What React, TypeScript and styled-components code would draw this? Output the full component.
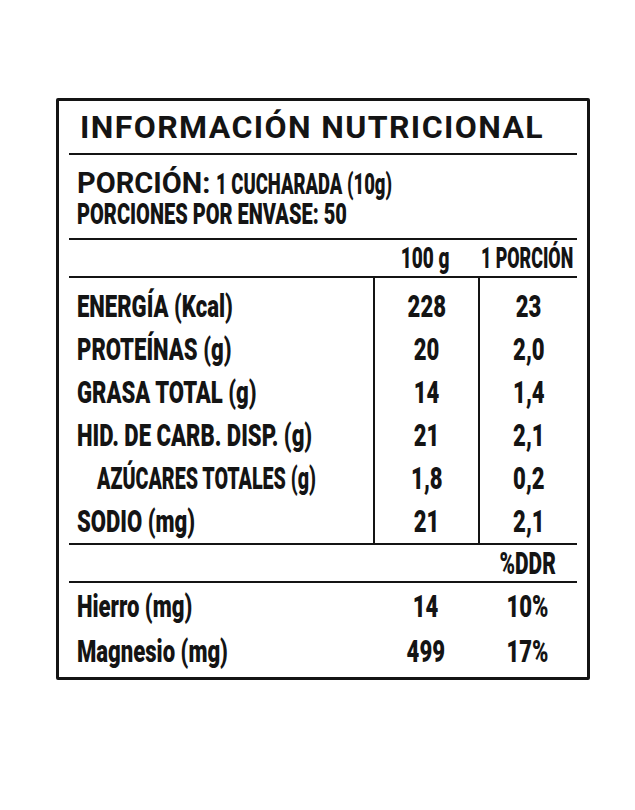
import { Fragment } from "react";
import styled, { createGlobalStyle } from "styled-components";

const Global = createGlobalStyle`
  body {
    margin: 0;
    background: #fff;
    color: #141414;
    font-family: Roboto, "Liberation Sans", sans-serif;
  }
`;

const Page = styled.main`
  padding: 98px 0 0 56px;
`;

const Label = styled.section`
  box-sizing: border-box;
  width: 534px;
  border: 3px solid #141414;
  border-radius: 2px;
  padding: 0 10px;
`;

const Title = styled.h1`
  margin: 0;
  height: 52px;
  display: flex;
  align-items: center;
  padding-left: 11px;
  font-size: 32px;
  font-weight: 700;
  letter-spacing: 1.4px;
  border-bottom: 2.5px solid #141414;
`;

const Serving = styled.div`
  padding: 12px 0 9px 8px;
  border-bottom: 2.5px solid #141414;
`;

const ServingLine = styled.div<{ $h: number; $size: number }>`
  height: ${(p) => p.$h}px;
  display: flex;
  align-items: center;
  font-size: ${(p) => p.$size}px;
  white-space: nowrap;
`;

const Strong = styled.span`
  margin-right: 6px;
  font-size: 29px;
  font-weight: 700;
`;

// DIN-like condensed lettering: squeeze heavy Roboto horizontally
const Cond = styled.span<{ $k?: number; $center?: boolean }>`
  display: inline-block;
  white-space: nowrap;
  font-weight: 900;
  transform: scaleX(${(p) => p.$k ?? 0.69});
  transform-origin: ${(p) => (p.$center ? "center" : "left")} center;
`;

const Grid = styled.div<{ $rows: string; $lined?: boolean }>`
  display: grid;
  grid-template-columns: 304px 105px 99px;
  grid-template-rows: ${(p) => p.$rows};
  border-bottom: ${(p) => (p.$lined ? "2.5px solid #141414" : "none")};
`;

const Cell = styled.div<{
  $divided?: boolean;
  $indent?: number;
  $size?: number;
  $pt?: number;
  $pb?: number;
}>`
  display: flex;
  align-items: center;
  justify-content: ${(p) => (p.$indent === undefined ? "center" : "flex-start")};
  padding: ${(p) => p.$pt ?? 0}px 0 ${(p) => p.$pb ?? 0}px ${(p) => p.$indent ?? 0}px;
  font-size: ${(p) => p.$size ?? 32}px;
  white-space: nowrap;
  border-left: ${(p) => (p.$divided ? "2.5px solid #141414" : "none")};
`;

const Filler = styled.div`
  height: 4px;
`;

type Row = { name: string; a: string; b: string; indent?: boolean; k?: number };

const nutrients: Row[] = [
  { name: "ENERGÍA (Kcal)", a: "228", b: "23", k: 0.69 },
  { name: "PROTEÍNAS (g)", a: "20", b: "2,0" },
  { name: "GRASA TOTAL (g)", a: "14", b: "1,4" },
  { name: "HID. DE CARB. DISP. (g)", a: "21", b: "2,1" },
  { name: "AZÚCARES TOTALES (g)", a: "1,8", b: "0,2", indent: true, k: 0.615 },
  { name: "SODIO (mg)", a: "21", b: "2,1" },
];

const minerals: Row[] = [
  { name: "Hierro (mg)", a: "14", b: "10%" },
  { name: "Magnesio (mg)", a: "499", b: "17%" },
];

const App = () => {
  const last = nutrients.length - 1;
  return (
    <Page>
      <Global />
      <Label>
        <Title>INFORMACIÓN NUTRICIONAL</Title>
        <Serving>
          <ServingLine $h={32} $size={30}>
            <Strong>PORCIÓN:</Strong>
            <Cond $k={0.615}>1 CUCHARADA (10g)</Cond>
          </ServingLine>
          <ServingLine $h={30} $size={29}>
            <Cond $k={0.69}>PORCIONES POR ENVASE: 50</Cond>
          </ServingLine>
        </Serving>

        <Grid $rows="36px" $lined>
          <Cell />
          <Cell $size={29}>
            <Cond $center $k={0.655}>100 g</Cond>
          </Cell>
          <Cell $size={29}>
            <Cond $center $k={0.615}>1 PORCIÓN</Cond>
          </Cell>
        </Grid>

        <Grid $rows="49px repeat(4, 43px) 44px" $lined>
          {nutrients.map((r, i) => {
            const pt = i === 0 ? 6 : 0;
            const pb = i === last ? 1 : 0;
            return (
              <Fragment key={r.name}>
                <Cell $indent={r.indent ? 28 : 8} $pt={pt} $pb={pb}>
                  <Cond $k={r.k}>{r.name}</Cond>
                </Cell>
                <Cell $divided $pt={pt} $pb={pb}>
                  <Cond $center>{r.a}</Cond>
                </Cell>
                <Cell $divided $pt={pt} $pb={pb}>
                  <Cond $center>{r.b}</Cond>
                </Cell>
              </Fragment>
            );
          })}
        </Grid>

        <Grid $rows="36px" $lined>
          <Cell />
          <Cell />
          <Cell $size={31}>
            <Cond $center $k={0.675}>%DDR</Cond>
          </Cell>
        </Grid>

        <Grid $rows="repeat(2, 45px)">
          {minerals.map((r) => (
            <Fragment key={r.name}>
              <Cell $indent={8}>
                <Cond $k={0.69}>{r.name}</Cond>
              </Cell>
              <Cell>
                <Cond $center>{r.a}</Cond>
              </Cell>
              <Cell>
                <Cond $center>{r.b}</Cond>
              </Cell>
            </Fragment>
          ))}
        </Grid>
        <Filler />
      </Label>
    </Page>
  );
};

export default App;
